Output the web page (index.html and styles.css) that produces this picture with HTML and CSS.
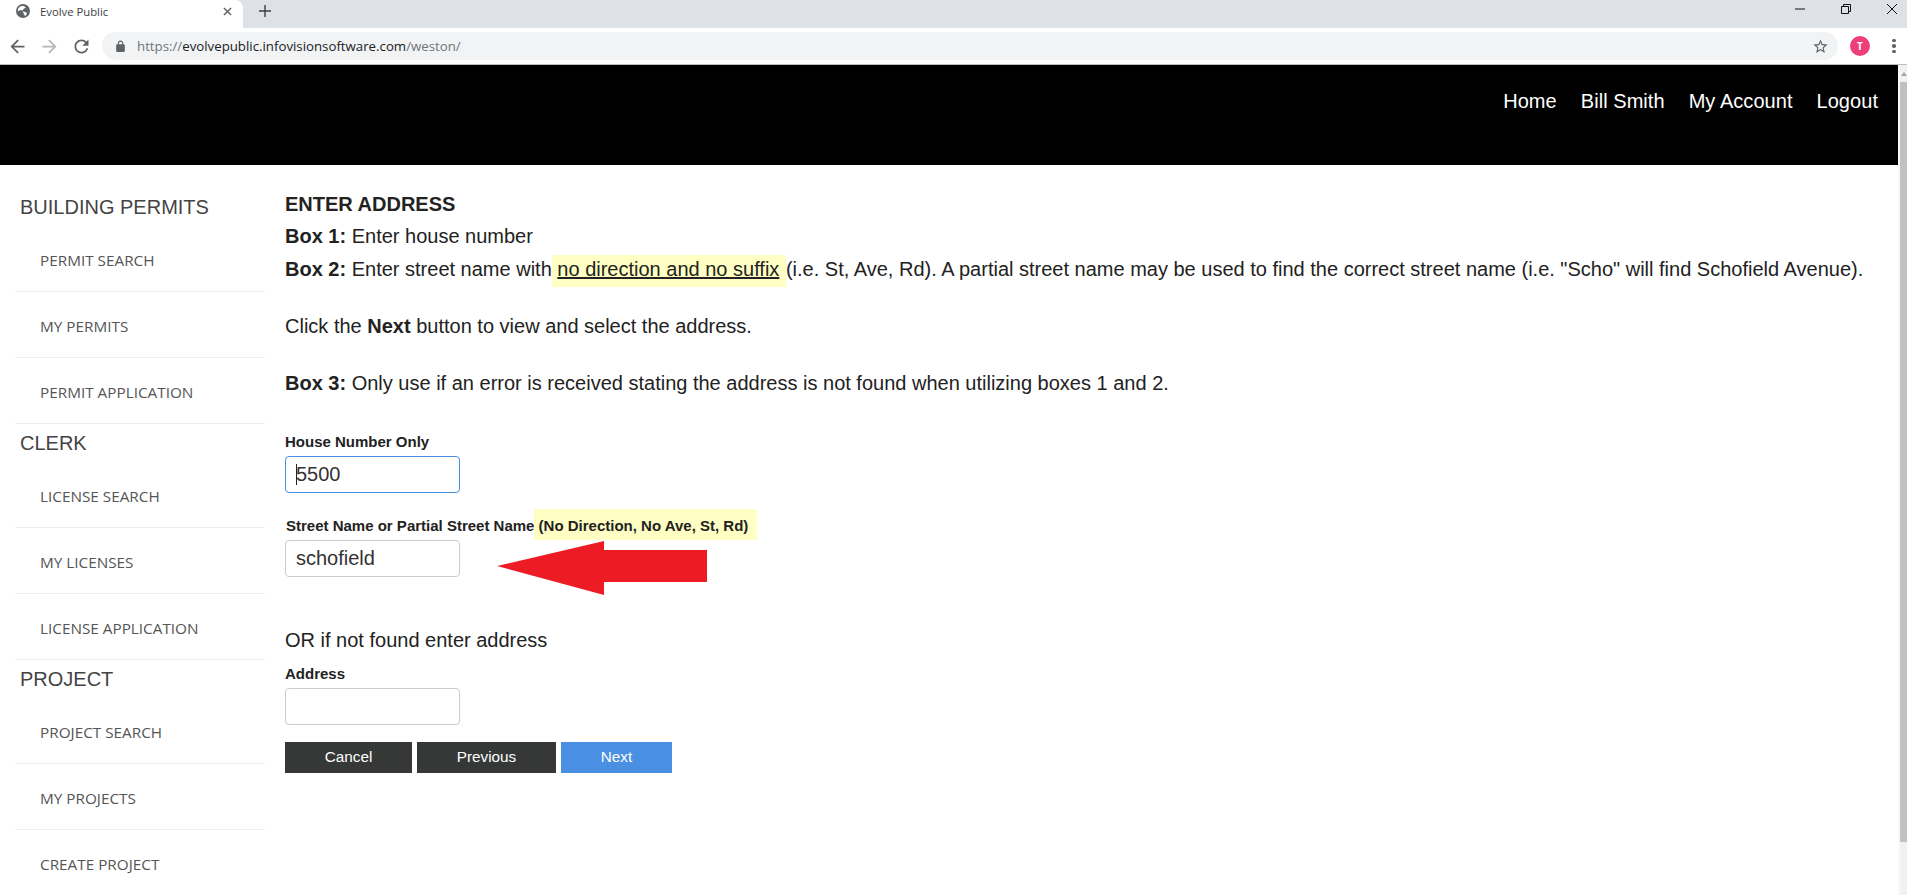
FILE: index.html
```html
<!DOCTYPE html>
<html lang="en">
<head>
    <meta charset="UTF-8">
    <meta name="viewport" content="width=device-width, initial-scale=1.0">
    <title>Evolve Public</title>
    <link rel="stylesheet" href="styles.css">
</head>
<body>
    <div class="tabstrip">
        <div class="tab">
            <svg class="tab-icon" viewBox="0 0 14 14"><circle cx="7" cy="7" r="7"/><path class="land" d="M3 3.4C4.5 2 6.5 1.700 8.300 2.300L9.800 3.800 7.700 4.700 6.600 6.400 4.200 6 2.700 7.200 1.700 6.200C1.900 5.200 2.300 4.200 3 3.400ZM6.500 7.600L9.700 8.100 11 9.600 9.500 11.900 8 10.800 7.700 9.300Z"/></svg>
            <span class="tab-title">Evolve Public</span>
            <svg class="tab-close" viewBox="0 0 10 10"><path d="M1 1l8 8M9 1l-8 8"/></svg>
        </div>
        <svg class="new-tab" viewBox="0 0 12 12"><path d="M6 0v12M0 6h12"/></svg>
        <div class="window-controls">
            <svg viewBox="0 0 10 10"><path d="M0 5h10"/></svg>
            <svg viewBox="0 0 10 10"><path d="M.5 2.5h7v7h-7zM2.5 2.5v-2h7v7h-2"/></svg>
            <svg viewBox="0 0 10 10"><path d="M0 0l10 10M10 0L0 10"/></svg>
        </div>
    </div>

    <div class="toolbar">
        <svg class="tool-icon" viewBox="0 0 24 24"><path d="M20 11H7.83l5.59-5.59L12 4l-8 8 8 8 1.41-1.41L7.83 13H20v-2z"/></svg>
        <svg class="tool-icon tool-disabled" viewBox="0 0 24 24"><path d="M4 11h12.17l-5.59-5.59L12 4l8 8-8 8-1.41-1.41L16.17 13H4v-2z"/></svg>
        <svg class="tool-icon" viewBox="0 0 24 24"><path d="M17.65 6.35C16.2 4.9 14.21 4 12 4c-4.42 0-7.99 3.58-7.99 8s3.57 8 7.99 8c3.73 0 6.84-2.55 7.73-6h-2.08c-.82 2.33-3.04 4-5.65 4-3.31 0-6-2.69-6-6s2.69-6 6-6c1.66 0 3.14.69 4.22 1.78L13 11h7V4l-2.35 2.35z"/></svg>
        <div class="omnibox">
            <svg class="lock" viewBox="0 0 24 24"><path d="M18 8h-1V6c0-2.76-2.24-5-5-5S7 3.24 7 6v2H6c-1.1 0-2 .9-2 2v10c0 1.1.9 2 2 2h12c1.1 0 2-.9 2-2V10c0-1.1-.9-2-2-2zM9 6c0-1.66 1.34-3 3-3s3 1.34 3 3v2H9V6z"/></svg>
            <span class="url">https://<b>evolvepublic.infovisionsoftware.com</b>/weston/</span>
            <svg class="star" viewBox="0 0 24 24"><path d="M22 9.24l-7.19-.62L12 2 9.19 8.63 2 9.24l5.46 4.73L5.82 21 12 17.27 18.18 21l-1.63-7.03L22 9.24zM12 15.4l-3.76 2.27 1-4.28-3.32-2.88 4.38-.38L12 6.1l1.71 4.04 4.38.38-3.32 2.88 1 4.28L12 15.4z"/></svg>
        </div>
        <div class="avatar">T</div>
        <div class="dots"><i></i><i></i><i></i></div>
    </div>

    <div class="viewport">
        <div class="page">
            <header class="topnav">
                <a href="#">Home</a>
                <a href="#">Bill Smith</a>
                <a href="#">My Account</a>
                <a href="#">Logout</a>
            </header>

            <div class="columns">
                <aside class="sidebar">
                    <h4>BUILDING PERMITS</h4>
                    <ul>
                        <li>PERMIT SEARCH</li>
                        <li>MY PERMITS</li>
                        <li>PERMIT APPLICATION</li>
                    </ul>
                    <h4>CLERK</h4>
                    <ul>
                        <li>LICENSE SEARCH</li>
                        <li>MY LICENSES</li>
                        <li>LICENSE APPLICATION</li>
                    </ul>
                    <h4>PROJECT</h4>
                    <ul>
                        <li>PROJECT SEARCH</li>
                        <li>MY PROJECTS</li>
                        <li>CREATE PROJECT</li>
                    </ul>
                </aside>

                <main class="content">
                    <p class="intro"><b>ENTER ADDRESS</b></p>
                    <p class="intro"><b>Box 1:</b> Enter house number</p>
                    <p class="intro"><b>Box 2:</b> Enter street name with<span class="mark"> <u>no direction and no suffix</u> </span>(i.e. St, Ave, Rd). A partial street name may be used to find the correct street name (i.e. "Scho" will find Schofield Avenue).</p>
                    <p class="intro spaced">Click the <b>Next</b> button to view and select the address.</p>
                    <p class="intro spaced"><b>Box 3:</b> Only use if an error is received stating the address is not found when utilizing boxes 1 and 2.</p>

                    <form>
                        <div class="field first">
                            <label for="house">House Number Only</label>
                            <div class="input-wrap">
                                <input id="house" class="focused" type="text" value="5500">
                                <span class="caret"></span>
                            </div>
                        </div>
                        <div class="field">
                            <label class="street-label" for="street">Street Name or Partial Street Name<span class="label-mark"> (No Direction, No Ave, St, Rd)</span></label>
                            <div class="input-wrap">
                                <input id="street" type="text" value="schofield">
                                <svg class="arrow" viewBox="0 0 211 54"><path d="M0 25L107 0V9H210V41H107V54Z"/></svg>
                            </div>
                        </div>
                        <p class="or-line">OR if not found enter address</p>
                        <div class="field">
                            <label for="address">Address</label>
                            <input id="address" type="text">
                        </div>
                        <div class="buttons">
                            <button type="button" class="btn btn-cancel">Cancel</button>
                            <button type="button" class="btn btn-prev">Previous</button>
                            <button type="button" class="btn btn-next">Next</button>
                        </div>
                    </form>
                </main>
            </div>
        </div>

        <div class="scrollbar">
            <div class="scroll-up"></div>
            <div class="scroll-thumb"></div>
        </div>
    </div>
</body>
</html>
```

FILE: styles.css
```css
* { box-sizing: border-box; }
html, body { height: 100%; }
body { margin: 0; overflow: hidden; background: #fff; color: #222; font-family: "Liberation Sans", Arial, sans-serif; display: flex; flex-direction: column; }

/* Browser chrome */
.tabstrip { height: 28px; flex: none; background: #dee1e6; display: flex; align-items: center; }
.tab { width: 243px; height: 28px; background: #fff; border-top-right-radius: 8px; display: flex; align-items: center; padding: 0 11px 6px 16px; }
.tab-icon { width: 14px; height: 14px; fill: #5f6368; flex: none; }
.tab-icon .land { fill: #fff; }
.tab-title { margin-left: 10px; font: 11.3px "Open Sans", sans-serif; color: #3c4043; flex: 1; }
.tab-close { width: 9px; height: 9px; fill: none; stroke: #5f6368; stroke-width: 1.6; }
.new-tab { width: 12px; height: 12px; margin: -6px 0 0 16px; fill: none; stroke: #3c4043; stroke-width: 1.4; }
.window-controls { margin-left: auto; display: flex; gap: 36px; padding: 0 10px 11px 0; }
.window-controls svg { width: 10px; height: 10px; fill: none; stroke: #111; stroke-width: 1; overflow: visible; }

.toolbar { height: 36px; flex: none; background: #fff; display: flex; align-items: center; padding: 0 0 0 7px; }
.tool-icon { width: 21px; height: 21px; fill: #5f6368; margin-right: 11px; flex: none; }
.tool-disabled { fill: #b4b6b8; }
.omnibox { width: 1736px; height: 28px; margin-left: -1px; border-radius: 14px; background: #f1f3f4; display: flex; align-items: center; padding: 0 9px 0 12px; }
.lock { width: 13px; height: 13px; fill: #5f6368; flex: none; }
.url { margin-left: 10px; font: 13.25px "Open Sans", sans-serif; color: #70757a; flex: 1; }
.url b { font-weight: normal; color: #202124; }
.star { width: 17px; height: 17px; fill: #5f6368; }
.avatar { width: 20px; height: 20px; margin-left: 12px; border-radius: 50%; background: #ee3e7c; color: #fff; font: bold 10px/20px "Open Sans", sans-serif; text-align: center; }
.dots { margin-left: 22px; display: flex; flex-direction: column; gap: 2px; }
.dots i { display: block; width: 3.5px; height: 3.5px; border-radius: 50%; background: #5f6368; }

.viewport { flex: 1; min-height: 0; display: flex; border-top: 1px solid #bdbdbd; }
.page { flex: 1; min-width: 0; }
.scrollbar { width: 9px; flex: none; background: #f1f1f1; border-left: 2px solid #f9f9f9; display: flex; flex-direction: column; }
.scroll-up { height: 17px; position: relative; }
.scroll-up::after { content: ""; position: absolute; left: 1px; top: 7px; border: 3px solid transparent; border-top: 0; border-bottom: 4px solid #a3a3a3; }
.scroll-thumb { height: 760px; background: #c1c1c1; }

/* Header */
.topnav { height: 100px; background: #000; display: flex; justify-content: flex-end; gap: 24px; padding: 24px 20px 0 0; }
.topnav a { color: #fff; font-size: 20px; line-height: 24px; letter-spacing: 0.05px; text-decoration: none; }

/* Layout */
.columns { display: flex; }
.sidebar { width: 285px; flex: none; padding: 23px 20px 0 15px; }
.sidebar h4 { margin: 0; padding-left: 5px; height: 38px; font-size: 20px; font-weight: normal; line-height: 39px; color: #444; }
.sidebar ul { list-style: none; margin: 0; padding: 0; }
.sidebar li { height: 66px; padding-left: 25px; border-bottom: 1px solid #eee; font: 15.3px/68px "Open Sans", sans-serif; color: #555; }

.content { flex: 1; padding-top: 23px; font-size: 20px; color: #222; }
.intro { margin: 0; line-height: 32.4px; white-space: nowrap; }
.spaced { margin-top: 24.6px; }
.mark { background: #ffffc4; padding: 3px 1px 7px 0; }

form { margin: 0; }
.field { margin-bottom: 23px; }
.field.first { margin-top: 33px; }
.field label { display: block; margin-bottom: 4px; font-size: 15px; font-weight: bold; line-height: 20px; color: #222; }
.street-label { padding-left: 1px; }
.label-mark { background: #ffffc4; padding: 8px 9px 6px 0; }
input { display: block; width: 175px; height: 37px; padding: 0 10px; border: 1px solid #ccc; border-radius: 4px; background: #fff; font: 20px "Liberation Sans", Arial, sans-serif; color: #333; outline: none; }
input.focused { border-color: #4a90e2; }
.input-wrap { position: relative; width: 175px; }
.caret { position: absolute; left: 11px; top: 8px; width: 1px; height: 21px; background: #222; }
.arrow { position: absolute; left: 212px; top: 1px; width: 211px; height: 54px; fill: #ed1c24; }
.or-line { margin: 47px 0 7px; font-size: 20px; line-height: 32.4px; }
.field:has(#address) { margin-bottom: 17px; }
.buttons { display: flex; gap: 5px; }
.btn { height: 31px; border: 0; color: #fff; font: 15.3px "Liberation Sans", Arial, sans-serif; padding: 0; }
.btn-cancel { width: 127px; background: #363838; }
.btn-prev { width: 139px; background: #363838; }
.btn-next { width: 111px; background: #4a90e2; }
```
